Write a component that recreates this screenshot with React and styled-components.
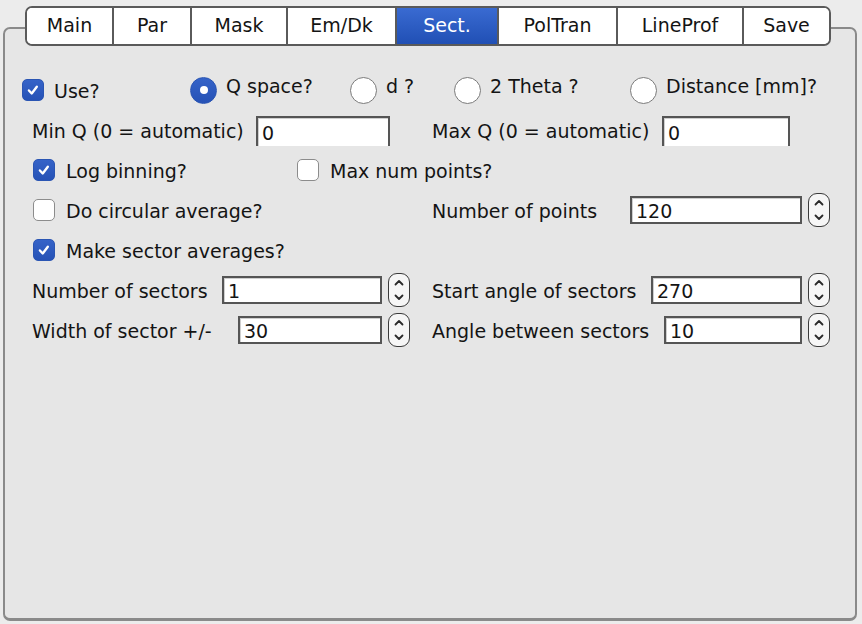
import React from 'react';
import styled, { createGlobalStyle } from 'styled-components';

const GlobalStyle = createGlobalStyle`
    body {
        margin: 0;
        background: #ececec;
        font-family: "DejaVu Sans", "Liberation Sans", sans-serif;
        font-size: 19px;
        color: #141414;
    }
`;

const Page = styled.div`
    width: 862px;
    height: 624px;
    padding: 0 5px 3px 3px;
    box-sizing: border-box;
    display: flex;
    flex-direction: column;
`;

const Panel = styled.div`
    margin-top: 27px;
    flex: 1;
    background: #e6e6e6;
    border: 2px solid #8a8a8a;
    border-bottom-width: 3px;
    border-radius: 7px;
    display: flex;
    flex-direction: column;
`;

const TabBar = styled.div`
    display: flex;
    margin: -23px 0 0 20px;
    align-self: flex-start;
    height: 40px;
    border: 2px solid #5a5a5a;
    border-radius: 7px;
    background: #ffffff;
    overflow: hidden;
    box-sizing: border-box;
`;

const Tab = styled.div`
    width: ${p => p.$w}px;
    box-sizing: border-box;
    display: flex;
    align-items: center;
    justify-content: center;
    border-left: ${p => (p.$first ? 'none' : '2px solid #5a5a5a')};
    color: ${p => (p.$active ? '#ffffff' : '#141414')};
    background: ${p => (p.$active ? 'linear-gradient(#3b6cd3, #1f4eb3)' : '#ffffff')};
    margin: ${p => (p.$active ? '-2px 0' : '0')};
    padding-bottom: 2px;
`;

const Form = styled.div`
    margin-top: 24px;
    display: flex;
    flex-direction: column;
`;

const Row = styled.div`
    display: grid;
    grid-template-columns: ${p => p.$cols || '400px 1fr'};
    height: 40px;
    align-items: center;
    padding-left: ${p => p.$pad ?? 27}px;
`;

const Item = styled.label`
    display: flex;
    align-items: center;
    gap: ${p => p.$gap ?? 11}px;
    white-space: nowrap;
`;

const ItemText = styled.span`
    padding-top: 2px;
`;

const RadioText = styled.span`
    padding-bottom: 8px;
`;

const Box = styled.span`
    width: 22px;
    height: 22px;
    margin-left: ${p => p.$indent ?? 1}px;
    box-sizing: border-box;
    border-radius: 5px;
    display: flex;
    align-items: center;
    justify-content: center;
    background: ${p => (p.$checked ? 'linear-gradient(#3563c8, #2652b6)' : '#ffffff')};
    border: 1px solid ${p => (p.$checked ? '#2a55b3' : '#8c8c8c')};
`;

const Circle = styled.span`
    width: 27px;
    height: 27px;
    box-sizing: border-box;
    border-radius: 50%;
    display: flex;
    align-items: center;
    justify-content: center;
    background: ${p => (p.$checked ? 'linear-gradient(#3563c8, #2652b6)' : '#ffffff')};
    border: ${p => (p.$checked ? '1px solid #2a55b3' : '1.5px solid #7a7a7a')};
`;

const Dot = styled.span`
    width: 8px;
    height: 8px;
    border-radius: 50%;
    background: #ffffff;
`;

const Field = styled.div`
    display: flex;
    align-items: center;
`;

const Label = styled.span`
    width: ${p => p.$w}px;
    white-space: nowrap;
    padding-top: 2px;
`;

const Input = styled.div`
    width: ${p => p.$w}px;
    height: ${p => (p.$open ? 30 : 28)}px;
    margin-top: ${p => (p.$open ? 2 : 0)}px;
    box-sizing: border-box;
    background: #ffffff;
    border: 2px solid #555555;
    border-bottom: ${p => (p.$open ? 'none' : '2px solid #555555')};
    box-shadow: inset 1px 1px 0 #cfcfcf;
    padding: 0 4px;
    display: flex;
    align-items: center;
    padding-bottom: ${p => (p.$open ? 0 : 0)}px;
    padding-top: 2px;
`;

const Spinner = styled.div`
    width: 22px;
    height: 34px;
    margin-left: 6px;
    box-sizing: border-box;
    border: 1.5px solid #3a3a3a;
    border-radius: 9px;
    background: #f6f6f6;
    display: flex;
    align-items: center;
    justify-content: center;
`;

const Check = ({ checked, label, indent, gap }) => (
    <Item $gap={gap}>
        <Box $checked={checked} $indent={indent}>
            {checked && (
                <svg width="22" height="22" viewBox="0 0 22 22">
                    <path d="M6.5 11.5 L9.6 14.8 L15.2 7.4" fill="none" stroke="#ffffff" strokeWidth="2.6" strokeLinecap="round" strokeLinejoin="round" />
                </svg>
            )}
        </Box>
        <ItemText>{label}</ItemText>
    </Item>
);

const Radio = ({ checked, label }) => (
    <Item $gap={9}>
        <Circle $checked={checked}>{checked && <Dot />}</Circle>
        <RadioText>{label}</RadioText>
    </Item>
);

const Arrows = () => (
    <svg width="12" height="26" viewBox="0 0 12 26">
        <path d="M2.5 7.5 L6 4 L9.5 7.5" fill="none" stroke="#2a2a2a" strokeWidth="1.8" strokeLinecap="round" strokeLinejoin="round" />
        <path d="M2.5 18.5 L6 22 L9.5 18.5" fill="none" stroke="#2a2a2a" strokeWidth="1.8" strokeLinecap="round" strokeLinejoin="round" />
    </svg>
);

const SetVar = ({ label, labelW, inputW, value, open, spin }) => (
    <Field>
        <Label $w={labelW}>{label}</Label>
        <Input $w={inputW} $open={open}>{value}</Input>
        {spin && <Spinner><Arrows /></Spinner>}
    </Field>
);

const tabs = [
    { name: 'Main', w: 85 },
    { name: 'Par', w: 78 },
    { name: 'Mask', w: 96 },
    { name: 'Em/Dk', w: 109 },
    { name: 'Sect.', w: 102, active: true },
    { name: 'PolTran', w: 119 },
    { name: 'LineProf', w: 126 },
    { name: 'Save', w: 87 },
];

export default function App() {
    return (
        <Page>
            <GlobalStyle />
            <Panel>
                <TabBar>
                    {tabs.map((t, i) => (
                        <Tab key={t.name} $w={t.w} $first={i === 0} $active={t.active}>
                            {t.name}
                        </Tab>
                    ))}
                </TabBar>
                <Form>
                    <Row $pad={17} $cols="168px 160px 104px 176px 1fr">
                        <Check checked label="Use?" indent={0} gap={10} />
                        <Radio checked label="Q space?" />
                        <Radio label="d ?" />
                        <Radio label="2 Theta ?" />
                        <Radio label="Distance [mm]?" />
                    </Row>
                    <Row>
                        <SetVar label="Min Q (0 = automatic)" labelW={224} inputW={134} value="0" open />
                        <SetVar label="Max Q (0 = automatic)" labelW={230} inputW={128} value="0" open />
                    </Row>
                    <Row $cols="264px 1fr">
                        <Check checked label="Log binning?" />
                        <Check label="Max num points?" />
                    </Row>
                    <Row>
                        <Check label="Do circular average?" />
                        <SetVar label="Number of points" labelW={198} inputW={172} value="120" spin />
                    </Row>
                    <Row>
                        <Check checked label="Make sector averages?" />
                    </Row>
                    <Row>
                        <SetVar label="Number of sectors" labelW={190} inputW={160} value="1" spin />
                        <SetVar label="Start angle of sectors" labelW={219} inputW={151} value="270" spin />
                    </Row>
                    <Row>
                        <SetVar label="Width of sector +/-" labelW={206} inputW={144} value="30" spin />
                        <SetVar label="Angle between sectors" labelW={232} inputW={138} value="10" spin />
                    </Row>
                </Form>
            </Panel>
        </Page>
    );
}
